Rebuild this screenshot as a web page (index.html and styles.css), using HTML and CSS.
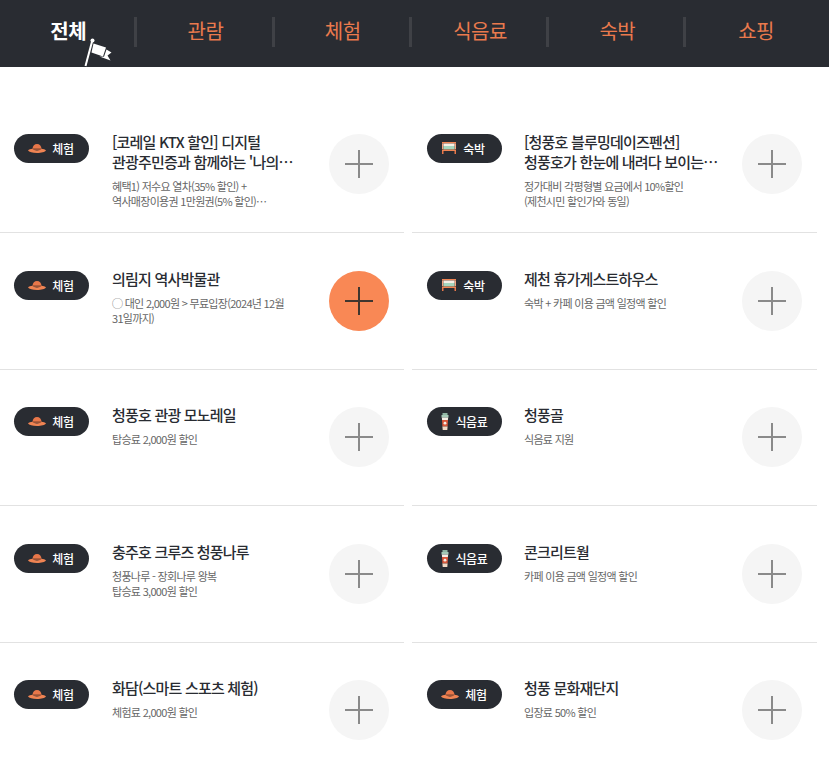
FILE: index.html
```html
<!DOCTYPE html>
<html lang="ko">
<head>
    <meta charset="UTF-8">
    <meta name="viewport" content="width=device-width, initial-scale=1.0">
    <title>제천 할인 혜택</title>
    <link rel="stylesheet" href="styles.css">
</head>
<body>
    <svg class="icon-defs" width="0" height="0">
        <symbol id="hat" viewBox="0 0 18 9">
            <path d="M4.500 5C4.700 1.500 6.500 0 9 0s4.300 1.500 4.500 5z" fill="#e8774a"/>
            <path d="M4.500 4.300h9V6h-9z" fill="#9a5236"/>
            <path d="M0 6.500C.8 5.500 2.800 5 4.500 4.800 5 6 6.800 6.400 9 6.400s4-.4 4.500-1.600c1.700.2 3.700.7 4.500 1.700C17 8 13.500 9 9 9S1 8 0 6.500z" fill="#f08453"/>
        </symbol>
        <symbol id="bed" viewBox="0 0 14 12">
            <path d="M0 0h14v1.500H0z" fill="#f08453"/>
            <path d="M0 1.500h1.500V7H0zM12.500 1.500H14V7h-1.500z" fill="#f4a582"/>
            <path d="M1.500 1.500h11V4h-11z" fill="#f6efe6"/>
            <path d="M1.500 4h11v3.500h-11z" fill="#a5d6bf"/>
            <path d="M0 7.500h14V9H0z" fill="#f08453"/>
            <path d="M0 9h1.500v3H0zM12.500 9H14v3h-1.500z" fill="#e8774a"/>
        </symbol>
        <symbol id="cup" viewBox="0 0 8 17">
            <path d="M1.500 0h5v2h-5z" fill="#8fb5a2"/>
            <path d="M.5 2h7v2.500h-7z" fill="#a5c9b6"/>
            <path d="M.8 4.500h6.400L6.900 7H1.100z" fill="#f6efe6"/>
            <path d="M1 7h6l-.4 6.500H1.400z" fill="#d9583b"/>
            <circle cx="4" cy="10.200" r="1.400" fill="#f6efe6"/>
            <path d="M1.400 13.500h5.200L6.300 17H1.700z" fill="#f2d9c4"/>
        </symbol>
    </svg>

    <nav class="tabs">
        <a class="tab active">전체
            <svg class="tab-flag" width="30" height="30" viewBox="0 0 30 30">
                <path d="M1.500 29 8.200 4" stroke="#fff" stroke-width="2" fill="none"/>
                <circle cx="8.500" cy="3.500" r="2" fill="#fff"/>
                <path d="M9.500 6.500 22 10.500 19 19.500 7.500 15.500z" fill="#fff"/>
                <path d="M22.500 12.500 27.500 15.500 23.500 18.500 26.500 23.500 15.500 19.500 20 19.800z" fill="#fff"/>
            </svg>
        </a>
        <a class="tab">관람</a>
        <a class="tab">체험</a>
        <a class="tab">식음료</a>
        <a class="tab">숙박</a>
        <a class="tab">쇼핑</a>
    </nav>

    <ul class="list">
        <li class="item">
            <span class="badge"><svg class="badge-icon"><use href="#hat"/></svg>체험</span>
            <div class="info">
                <h3 class="info-title">[코레일 KTX 할인] 디지털<br>관광주민증과 함께하는 '나의…</h3>
                <p class="info-desc">혜택1) 저수요 열차(35% 할인) +<br>역사매장이용권 1만원권(5% 할인)…</p>
            </div>
            <button class="add"></button>
        </li>
        <li class="item">
            <span class="badge"><svg class="badge-icon icon-bed"><use href="#bed"/></svg>숙박</span>
            <div class="info">
                <h3 class="info-title">[청풍호 블루밍데이즈펜션]<br>청풍호가 한눈에 내려다 보이는…</h3>
                <p class="info-desc">정가대비 각평형별 요금에서 10%할인<br>(제천시민 할인가와 동일)</p>
            </div>
            <button class="add"></button>
        </li>
        <li class="item">
            <span class="badge"><svg class="badge-icon"><use href="#hat"/></svg>체험</span>
            <div class="info">
                <h3 class="info-title">의림지 역사박물관</h3>
                <p class="info-desc">◯ 대인 2,000원 &gt; 무료입장(2024년 12월<br>31일까지)</p>
            </div>
            <button class="add on"></button>
        </li>
        <li class="item">
            <span class="badge"><svg class="badge-icon icon-bed"><use href="#bed"/></svg>숙박</span>
            <div class="info">
                <h3 class="info-title">제천 휴가게스트하우스</h3>
                <p class="info-desc">숙박 + 카페 이용 금액 일정액 할인</p>
            </div>
            <button class="add"></button>
        </li>
        <li class="item">
            <span class="badge"><svg class="badge-icon"><use href="#hat"/></svg>체험</span>
            <div class="info">
                <h3 class="info-title">청풍호 관광 모노레일</h3>
                <p class="info-desc">탑승료 2,000원 할인</p>
            </div>
            <button class="add"></button>
        </li>
        <li class="item">
            <span class="badge"><svg class="badge-icon icon-cup"><use href="#cup"/></svg>식음료</span>
            <div class="info">
                <h3 class="info-title">청풍골</h3>
                <p class="info-desc">식음료 지원</p>
            </div>
            <button class="add"></button>
        </li>
        <li class="item">
            <span class="badge"><svg class="badge-icon"><use href="#hat"/></svg>체험</span>
            <div class="info">
                <h3 class="info-title">충주호 크루즈 청풍나루</h3>
                <p class="info-desc">청풍나루 - 장회나루 왕복<br>탑승료 3,000원 할인</p>
            </div>
            <button class="add"></button>
        </li>
        <li class="item">
            <span class="badge"><svg class="badge-icon icon-cup"><use href="#cup"/></svg>식음료</span>
            <div class="info">
                <h3 class="info-title">콘크리트월</h3>
                <p class="info-desc">카페 이용 금액 일정액 할인</p>
            </div>
            <button class="add"></button>
        </li>
        <li class="item">
            <span class="badge"><svg class="badge-icon"><use href="#hat"/></svg>체험</span>
            <div class="info">
                <h3 class="info-title">화담(스마트 스포츠 체험)</h3>
                <p class="info-desc">체험료 2,000원 할인</p>
            </div>
            <button class="add"></button>
        </li>
        <li class="item">
            <span class="badge"><svg class="badge-icon"><use href="#hat"/></svg>체험</span>
            <div class="info">
                <h3 class="info-title">청풍 문화재단지</h3>
                <p class="info-desc">입장료 50% 할인</p>
            </div>
            <button class="add"></button>
        </li>
    </ul>
</body>
</html>
```

FILE: styles.css
```css
body, html {
    margin: 0;
    padding: 0;
    font-family: "Noto Sans CJK KR", "Noto Sans", sans-serif;
    background: #fff;
}
.icon-defs {
    display: block;
    height: 0;
}
.tabs {
    display: grid;
    grid-template-columns: repeat(6, 137.3px);
    height: 67px;
    background: #292c32;
}
.tab {
    position: relative;
    display: flex;
    align-items: flex-start;
    justify-content: center;
    box-sizing: border-box;
    height: 30px;
    margin-top: 17px;
    padding-left: 2px;
    color: #ea7a4d;
    font-size: 20px;
    line-height: 28px;
    letter-spacing: -0.5px;
    border-right: 3px solid #3f4146;
}
.tab:last-child {
    border-right: none;
}
.tab.active {
    color: #fff;
    font-weight: 700;
}
.tab-flag {
    position: absolute;
    left: 84px;
    top: 20px;
}
.list {
    display: grid;
    grid-template-columns: 404px 405px;
    column-gap: 8px;
    margin: 0;
    padding: 29.400px 0 0;
    list-style: none;
}
.item {
    display: flex;
    align-items: flex-start;
    box-sizing: border-box;
    height: 136.600px;
    padding: 37.600px 15px 0 14px;
    border-bottom: 1px solid #e2e2e2;
}
.item:nth-child(even) {
    padding-left: 15px;
}
.item:nth-child(even) .info {
    margin-left: 22px;
}
.item:nth-last-child(-n+2) {
    border-bottom: none;
}
.badge {
    display: flex;
    align-items: center;
    justify-content: center;
    gap: 6px;
    flex: none;
    width: 75px;
    height: 29px;
    border-radius: 15px;
    background: #292c32;
    color: #fff;
    font-size: 12px;
    font-weight: 500;
    letter-spacing: -0.3px;
}
.badge-icon {
    width: 18px;
    height: 9px;
    margin-left: -1px;
}
.icon-bed {
    width: 14px;
    height: 12px;
    margin: 0 1px 0 -2px;
}
.icon-cup {
    width: 8px;
    height: 17px;
    margin: 0;
}
.info {
    flex: 1;
    min-width: 0;
    margin: -2px 0 0 23px;
}
.info-title {
    margin: 0;
    color: #292c32;
    font-size: 15px;
    font-weight: 500;
    line-height: 20px;
    letter-spacing: -0.8px;
}
.info-desc {
    margin: 7px 0 0;
    color: #666;
    font-size: 11px;
    font-weight: 400;
    line-height: 15.500px;
    letter-spacing: -0.7px;
}
.add {
    position: relative;
    flex: none;
    width: 60px;
    height: 60px;
    padding: 0;
    border: none;
    border-radius: 50%;
    background: #f5f5f5;
}
.add::before,
.add::after {
    content: "";
    position: absolute;
    background: #8a8a8a;
}
.add::before {
    left: 16px;
    top: 29px;
    width: 28px;
    height: 2px;
}
.add::after {
    left: 29px;
    top: 16px;
    width: 2px;
    height: 28px;
}
.add.on {
    background: #f98855;
}
.add.on::before,
.add.on::after {
    background: #40362f;
}
```
